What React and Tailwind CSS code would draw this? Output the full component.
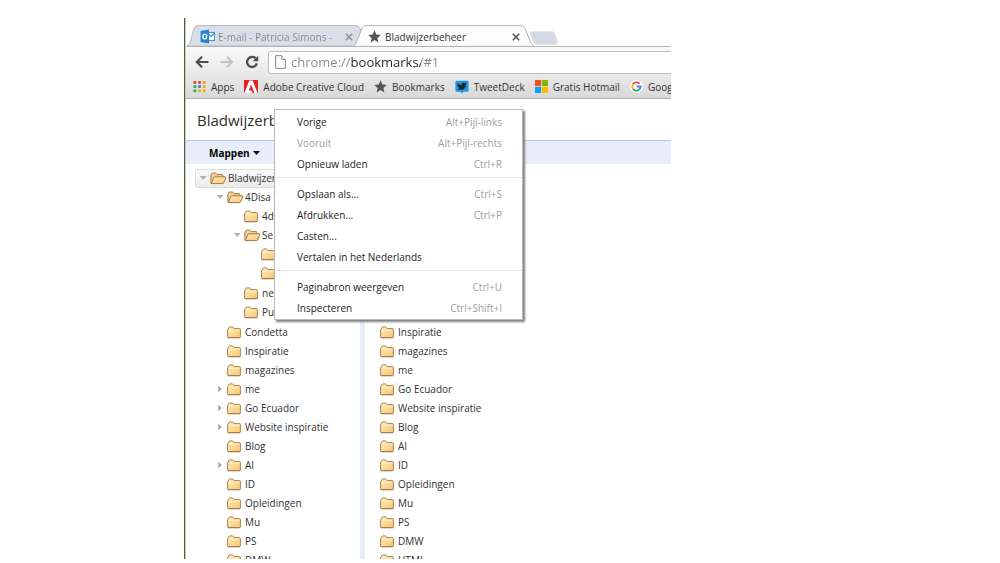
import React from "react";

function FolderIcon() {
  return (
    <svg className="h-[13px] w-[14px] shrink-0" viewBox="0 0 14 13" aria-hidden="true">
      <defs>
        <linearGradient id="folder" x1="0" y1="0" x2="1" y2="1">
          <stop offset="0" stopColor="#ffedc0" />
          <stop offset="1" stopColor="#f8c672" />
        </linearGradient>
      </defs>
      <path
        d="M.6 11V3.6Q.6 2.9 1.3 2.9L2 1.4Q2.2.9 2.8.9H5.4Q6 .9 6.3 1.4L7 2.6H12.6Q13.4 2.6 13.4 3.4V11Q13.4 11.6 12.8 11.6H1.2Q.6 11.6.6 11Z"
        fill="url(#folder)"
        stroke="#a98350"
        strokeWidth="1"
      />
      <path d="M1.6 4.1H12.4" stroke="#fff3d2" strokeWidth=".8" />
      <path d="M1 11.8H13" stroke="#8f6a3e" strokeWidth=".6" />
    </svg>
  );
}

function OpenFolderIcon() {
  return (
    <svg className="h-[13px] w-[17px] shrink-0" viewBox="0 0 17 13" aria-hidden="true">
      <path
        d="M.9 11V3.4L2 1.6Q2.3 1 3 1H5.4Q6 1 6.3 1.5L7 2.6H12Q12.8 2.6 12.8 3.4V5L11 11Z"
        fill="#f5d193"
        stroke="#a07a48"
      />
      <path
        d="M1.2 11.6L4 5.3Q4.2 4.8 4.8 4.8H15.4Q16.2 4.8 15.9 5.6L13.6 11Q13.4 11.6 12.8 11.6Z"
        fill="url(#folder)"
        stroke="#a07a48"
      />
    </svg>
  );
}

function Arrow({ open, name }) {
  return (
    <button type="button" aria-label={name} aria-expanded={open} className="flex w-2 shrink-0 items-center justify-center">
      <svg className="h-2 w-2" viewBox="0 0 8 8" aria-hidden="true">
        {open ? <path d="M.8 2H7.6L4.2 6Z" fill="#b0b0b0" /> : <path d="M2.2.8V7.2L6 4Z" fill="#a8a8a8" />}
      </svg>
    </button>
  );
}

function TreeItem({ node, root }) {
  const open = Boolean(node.children);
  return (
    <li>
      <div
        className={
          root
            ? "flex h-[19px] items-center rounded-[2px] border border-[#dcdcdc] bg-linear-to-b from-[#f8f8f8] to-[#ececec] pl-[3px]"
            : "flex h-[19px] items-center pl-1"
        }
      >
        {open || node.closed ? <Arrow open={open} name={node.name || "Map"} /> : <span className="w-2 shrink-0" />}
        <a href="#1" className="ml-[3px] flex items-center gap-1 whitespace-nowrap">
          <span className="flex w-[14px] shrink-0">{open ? <OpenFolderIcon /> : <FolderIcon />}</span>
          {node.name}
        </a>
      </div>
      {open && (
        <ul className={root ? "pl-[17px]" : "pb-px pl-[17px]"}>
          {node.children.map((c, i) => (
            <TreeItem key={i} node={c} />
          ))}
        </ul>
      )}
    </li>
  );
}

const tree = {
  name: "Bladwijzer",
  children: [
    {
      name: "4Disa T",
      children: [
        { name: "4d" },
        { name: "Se", children: [{ name: "" }, { name: "" }] },
        { name: "ne" },
        { name: "Pu" },
      ],
    },
    { name: "Condetta" },
    { name: "Inspiratie" },
    { name: "magazines" },
    { name: "me", closed: true },
    { name: "Go Ecuador", closed: true },
    { name: "Website inspiratie", closed: true },
    { name: "Blog" },
    { name: "AI", closed: true },
    { name: "ID" },
    { name: "Opleidingen" },
    { name: "Mu" },
    { name: "PS" },
    { name: "DMW" },
  ],
};

const list = [
  "Inspiratie", "magazines", "me", "Go Ecuador", "Website inspiratie", "Blog",
  "AI", "ID", "Opleidingen", "Mu", "PS", "DMW", "HTML",
];

const menu = [
  [
    ["Vorige", "Alt+Pijl-links"],
    ["Vooruit", "Alt+Pijl-rechts", true],
    ["Opnieuw laden", "Ctrl+R"],
  ],
  [
    ["Opslaan als...", "Ctrl+S"],
    ["Afdrukken...", "Ctrl+P"],
    ["Casten...", ""],
    ["Vertalen in het Nederlands", ""],
  ],
  [
    ["Paginabron weergeven", "Ctrl+U"],
    ["Inspecteren", "Ctrl+Shift+I"],
  ],
];

function Star() {
  return (
    <svg className="h-[13px] w-[13px] shrink-0" viewBox="0 0 13 13" aria-hidden="true">
      <path d="M6.5.3L8.3 4.5L12.8 4.9L9.4 7.9L10.4 12.4L6.5 10L2.6 12.4L3.6 7.9L.2 4.9L4.7 4.5Z" fill="#555" />
    </svg>
  );
}

function AppsIcon() {
  const colors = ["#e8453c", "#e8453c", "#f0a030", "#3aa757", "#4285f4", "#f0b400", "#3aa757", "#f0b400", "#f0b400"];
  return (
    <svg className="h-[13px] w-[13px] shrink-0" viewBox="0 0 13 13" aria-hidden="true">
      {colors.map((c, i) => (
        <rect key={i} x={0.5 + (i % 3) * 4.6} y={1 + Math.floor(i / 3) * 4.2} width="2.8" height="2.8" fill={c} />
      ))}
    </svg>
  );
}

function AdobeIcon() {
  return (
    <svg className="h-[13px] w-[14px] shrink-0" viewBox="0 0 14 13" aria-hidden="true">
      <rect width="14" height="13" fill="#ec1c24" />
      <path d="M5.3.6H8.7L13.6 13H.4Z" fill="#fff" />
      <path d="M7 4.6L10.4 13H8.3L7.4 10.6H4.9Z" fill="#ec1c24" />
    </svg>
  );
}

function TweetDeckIcon() {
  return (
    <svg className="h-[14px] w-[14px] shrink-0" viewBox="0 0 14 14" aria-hidden="true">
      <path d="M1.8.8H12.2Q13.6.8 13.6 2.2V10.4Q13.6 11.8 12.2 11.8H8.6L7 13.6L5.4 11.8H1.8Q.4 11.8.4 10.4V2.2Q.4.8 1.8.8Z" fill="#1d9be8" />
      <path
        d="M2.6 3Q4.4 5 6.8 5Q6.6 2.6 8.6 2.4Q9.6 2.4 10.2 3L11.6 2.6L11 3.6L11.9 3.5L11 4.5Q11 8 8.2 9.3Q5 10.6 2.2 8.9Q3.8 9 4.8 8.1Q3.5 7.9 3.1 6.8H3.9Q2.5 6.2 2.4 4.9L3.1 5.1Q2.1 4.1 2.6 3Z"
        fill="#20262b"
      />
    </svg>
  );
}

function MicrosoftIcon() {
  return (
    <svg className="h-[13px] w-[13px] shrink-0" viewBox="0 0 13 13" aria-hidden="true">
      <rect width="6.1" height="6.1" fill="#f25022" />
      <rect x="6.9" width="6.1" height="6.1" fill="#7fba00" />
      <rect y="6.9" width="6.1" height="6.1" fill="#00a4ef" />
      <rect x="6.9" y="6.9" width="6.1" height="6.1" fill="#ffb900" />
    </svg>
  );
}

function GoogleIcon() {
  return (
    <svg className="h-[13px] w-[13px] shrink-0" viewBox="0 0 13 13" aria-hidden="true">
      <circle cx="6.5" cy="6.5" r="6.5" fill="#fff" />
      <g fill="none" strokeWidth="1.9">
        <path d="M2.9 4.4A4.1 4.1 0 0 1 9.5 3.7" stroke="#ea4335" />
        <path d="M2.9 8.6A4.1 4.1 0 0 1 2.9 4.4" stroke="#fbbc05" />
        <path d="M9.4 9.4A4.1 4.1 0 0 1 2.9 8.6" stroke="#34a853" />
        <path d="M6.6 6.5H10.6A4.1 4.1 0 0 1 9.4 9.4" stroke="#4285f4" />
      </g>
    </svg>
  );
}

function OutlookIcon() {
  return (
    <svg className="h-[15px] w-[15px] shrink-0" viewBox="0 0 15 15" aria-hidden="true">
      <rect x="7.5" y="3.4" width="6.9" height="8.2" fill="#fff" stroke="#3a8fd6" strokeWidth="1" />
      <path d="M8 4.4L11 7.4L14.4 4" fill="none" stroke="#3a8fd6" strokeWidth="1.2" />
      <path d="M.6 2L9 .5V14.5L.6 13Z" fill="#2384d3" />
      <ellipse cx="4.8" cy="7.5" rx="1.9" ry="2.4" fill="none" stroke="#fff" strokeWidth="1.4" />
    </svg>
  );
}

function Close({ name, color }) {
  return (
    <button type="button" aria-label={name} className={color}>
      <svg className="h-2 w-2" viewBox="0 0 8 8" aria-hidden="true">
        <path d="M.8.8L7.2 7.2M7.2.8L.8 7.2" stroke="currentColor" strokeWidth="1.5" />
      </svg>
    </button>
  );
}

const bookmarks = [
  ["Apps", AppsIcon],
  ["Adobe Creative Cloud", AdobeIcon],
  ["Bookmarks", Star],
  ["TweetDeck", TweetDeckIcon],
  ["Gratis Hotmail", MicrosoftIcon],
  ["Goog", GoogleIcon],
];

function TabStrip() {
  return (
    <div className="flex h-[30px] items-end overflow-hidden border-b border-[#b4b4b4] pl-px">
      <div className="relative flex h-[21px] w-[174px] shrink-0 items-center pl-[13px] pr-[8px] pt-[2px]">
        <svg className="absolute inset-0 h-full w-full" viewBox="0 0 174 21" aria-hidden="true">
          <path d="M0 21Q2 20 3 17.5L7 4Q8 .6 11 .6H169Q172 .6 173 3.5L174 6V21Z" fill="#d9dfe8" stroke="#b5b8be" />
        </svg>
        <div className="relative flex w-full items-center">
          <OutlookIcon />
          <a href="#mail" className="ml-[3px] grow overflow-hidden whitespace-nowrap bg-linear-to-r from-[#858585] from-85% to-transparent bg-clip-text text-transparent">
            E-mail - Patricia Simons -
          </a>
          <Close name="Sluit E-mail" color="text-[#8f8f8f]" />
        </div>
      </div>
      <div className="relative -ml-2 flex h-[21px] w-[182px] shrink-0 items-center pl-[15px] pr-[15px] pt-[2px]">
        <svg className="absolute inset-0 h-full w-full" viewBox="0 0 182 21" aria-hidden="true">
          <path d="M0 21.4Q2 20.5 3 18L9 3.4Q10.2.6 13 .6H168Q171 .6 172 3.4L178 18Q179 20.5 181.5 21.4Z" fill="#fdfdfd" stroke="#b4b4b4" />
        </svg>
        <div className="relative flex w-full items-center">
          <Star />
          <a href="#1" className="ml-1 grow whitespace-nowrap text-[#333]">Bladwijzerbeheer</a>
          <Close name="Sluit Bladwijzerbeheer" color="text-[#555]" />
        </div>
      </div>
      <button type="button" aria-label="Nieuw tabblad" className="-ml-[6px] self-end pb-px">
        <svg className="h-[14px] w-[30px]" viewBox="0 0 30 14" aria-hidden="true">
          <path d="M3 .6H23Q25 .6 25.8 2.4L28.6 11Q29.2 13.4 27 13.4H7.6Q5.6 13.4 4.8 11.5L1.4 2.6Q.8.6 3 .6Z" fill="#d4dae4" stroke="#dfe2e8" strokeWidth=".8" />
        </svg>
      </button>
    </div>
  );
}

function Toolbar() {
  return (
    <div className="h-[53px] overflow-hidden border-b border-[#b2b2b2] bg-linear-to-b from-[#fafafa] to-[#d9d9d9]">
      <div className="flex h-[27px] items-center pl-[9px] pt-[3px]">
        <button type="button" aria-label="Vorige">
          <svg className="h-[14px] w-[14px]" viewBox="0 0 14 14" fill="none" stroke="#4d4d4d" strokeWidth="2.2" aria-hidden="true">
            <path d="M13.5 7H2M7 1.8L1.8 7L7 12.2" />
          </svg>
        </button>
        <button type="button" aria-label="Vooruit" className="ml-[11px]">
          <svg className="h-[14px] w-[14px]" viewBox="0 0 14 14" fill="none" stroke="#c4c4c4" strokeWidth="2" aria-hidden="true">
            <path d="M.5 7H12M7 1.8L12.2 7L7 12.2" />
          </svg>
        </button>
        <button type="button" aria-label="Opnieuw laden" className="ml-[11px]">
          <svg className="h-[14px] w-[14px]" viewBox="0 0 14 14" aria-hidden="true">
            <path d="M10.6 3.4A5 5 0 1 0 11.9 8.4" fill="none" stroke="#4d4d4d" strokeWidth="2.3" />
            <path d="M13.2.8V6.3H7.7Z" fill="#4d4d4d" />
          </svg>
        </button>
        <label className="-mr-1 ml-[9px] flex h-[23px] grow items-center rounded-[3px] border border-[#bdbdbd] bg-white pl-[6px]">
          <svg className="h-[14px] w-[11px] shrink-0" viewBox="0 0 11 14" fill="#fafafa" stroke="#8e8e8e" aria-hidden="true">
            <path d="M.6.6H6.6L10.4 4.4V13.4H.6Z" />
            <path d="M6.6.6V4.4H10.4" />
          </svg>
          <input
            type="text"
            aria-label="Adres"
            defaultValue="chrome://bookmarks/#1"
            className="ml-[5px] w-full min-w-0 bg-[linear-gradient(90deg,#8a8a8a_60px,#262626_60px,#262626_130px,#8a8a8a_130px)] bg-clip-text text-[13px] leading-5 text-transparent outline-none"
          />
        </label>
      </div>
      <nav className="flex h-[25px] items-center gap-[10px] whitespace-nowrap pl-[7px]">
        {bookmarks.map(([name, Icon]) => (
          <a key={name} href="#bookmark" className="flex shrink-0 items-center gap-[5px] text-[#333]">
            <Icon />
            {name}
          </a>
        ))}
      </nav>
    </div>
  );
}

function ContextMenu() {
  return (
    <div role="menu" className="absolute left-[89px] top-[91px] w-[249px] border border-[#bababa] bg-white pb-px pt-px shadow-[2px_2px_2px_#808080]">
      {menu.map((group, g) => (
        <React.Fragment key={g}>
          {g > 0 && <hr className="mb-[5px] mt-[3px] border-[#e2e2e2]" />}
          {group.map(([name, keys, disabled]) => (
            <button
              key={name}
              type="button"
              role="menuitem"
              disabled={disabled}
              className="flex h-[21px] w-full items-center justify-between whitespace-nowrap pl-[22px] pr-5 text-[#222] disabled:text-[#a0a0a0]"
            >
              <span>{name}</span>
              <span className="text-[#a0a0a0]">{keys}</span>
            </button>
          ))}
        </React.Fragment>
      ))}
    </div>
  );
}

export default function App() {
  return (
    <div className="h-screen overflow-hidden bg-white pb-1 pl-[18.4%] pr-[32.9%] pt-[18px] font-['Open_Sans','Noto_Sans',sans-serif] text-[10px] leading-4 text-[#303030]">
      <div className="relative h-full overflow-hidden border-l border-[#1f6592]">
        <div className="flex h-full flex-col border-l border-[#f0c873]">
          <TabStrip />
          <Toolbar />
          <header>
            <h1 className="flex h-[41px] items-center pl-[11px] pt-px text-[15px] text-[#303030]">Bladwijzerb</h1>
            <div className="flex h-6 items-center border-t border-[#aecbf5] bg-[#e8edfa] pl-[23px]">
              <button type="button" className="flex items-center gap-[3px] pt-px font-bold text-black">
                Mappen
                <svg className="h-1 w-[7px]" viewBox="0 0 7 4" aria-hidden="true">
                  <path d="M0 0H7L3.5 4Z" fill="#111" />
                </svg>
              </button>
            </div>
          </header>
          <main className="flex min-h-0 grow overflow-hidden">
            <div className="w-[174px] shrink-0 pl-[9px] pt-[5px]">
              <ul>
                <TreeItem node={tree} root />
              </ul>
            </div>
            <div className="w-[5px] shrink-0 bg-[#e8edfa]" />
            <ul className="grow pl-[15px] pt-[159px]">
              {list.map((name) => (
                <li key={name} className="flex h-[19px] items-center">
                  <a href="#1" className="flex items-center gap-1 whitespace-nowrap">
                    <FolderIcon />
                    {name}
                  </a>
                </li>
              ))}
            </ul>
          </main>
        </div>
        <ContextMenu />
      </div>
    </div>
  );
}
